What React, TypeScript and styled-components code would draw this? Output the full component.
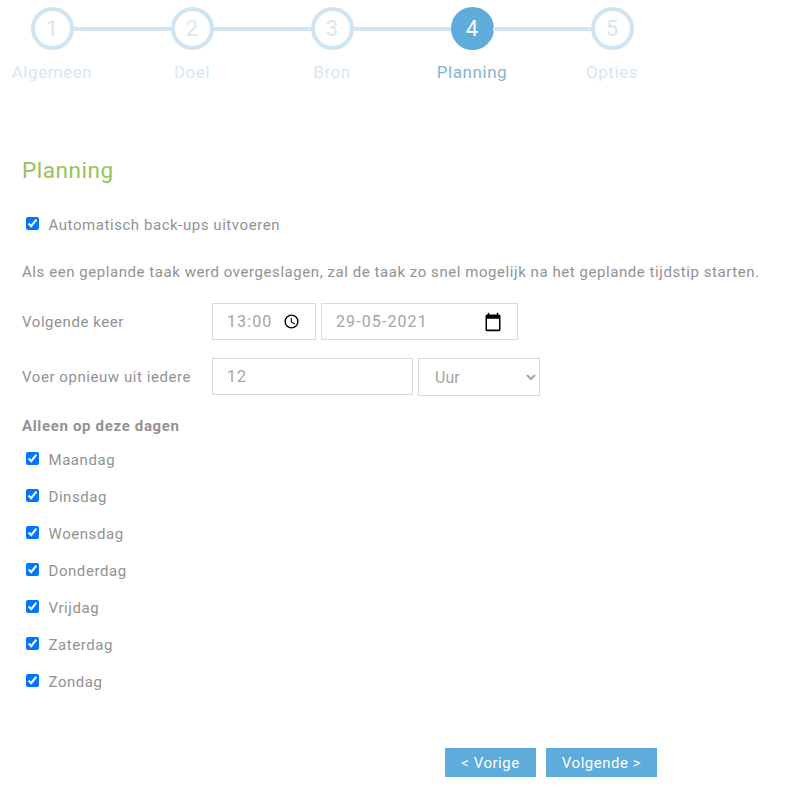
import styled, { createGlobalStyle } from 'styled-components'

const GlobalStyle = createGlobalStyle`
    html, body {
        margin: 0;
        padding: 0;
        background: #fff;
    }
    body {
        font-family: Roboto, "Liberation Sans", sans-serif;
        font-size: 15px;
        color: #929292;
        letter-spacing: 0.56px;
    }
`

const Page = styled.div`
    width: 809px;
    height: 798px;
    overflow: hidden;
`

const Stepper = styled.div`
    display: flex;
    margin-left: -18px;
    padding-top: 7px;
`

const Step = styled.div<{ $active?: boolean }>`
    position: relative;
    display: flex;
    flex-direction: column;
    align-items: center;
    width: 140px;
    font-size: 17px;
    color: ${(p) => (p.$active ? '#85b3d2' : '#d6e7f1')};

    &:not(:last-child)::after {
        content: '';
        position: absolute;
        top: 19.5px;
        left: 91px;
        width: 98px;
        height: 4px;
        background: #cfe5f1;
    }
`

const Circle = styled.div<{ $active?: boolean }>`
    box-sizing: border-box;
    width: 43px;
    height: 43px;
    border-radius: 50%;
    border: 4px solid ${(p) => (p.$active ? '#5eacdc' : '#cfe5f1')};
    background: ${(p) => (p.$active ? '#5eacdc' : '#fff')};
    color: ${(p) => (p.$active ? '#fff' : '#d6e7f1')};
    font-size: 22px;
    letter-spacing: 0;
    display: flex;
    align-items: center;
    justify-content: center;
`

const StepLabel = styled.div`
    margin-top: 13px;
    line-height: 19px;
`

const Content = styled.div`
    padding: 73px 0 0 22px;
`

const Title = styled.h2`
    margin: 0 0 21px;
    font-size: 22.5px;
    line-height: 30px;
    font-weight: 400;
    color: #96c25a;
`

const CheckRow = styled.label`
    display: flex;
    align-items: center;
    height: 37px;
    padding-left: 4px;
`

const Check = styled.input.attrs({ type: 'checkbox', defaultChecked: true })`
    width: 13px;
    height: 13px;
    margin: 0 9.5px 2px 0;
`

const Note = styled.p`
    margin: 19px 0 21px;
    line-height: 20px;
`

const FormRow = styled.div`
    display: flex;
    align-items: flex-start;
    gap: 5px;
    margin-bottom: 18px;
`

const RowLabel = styled.div`
    width: 185px;
    height: 37px;
    line-height: 38px;
`

const Field = styled.div<{ $width: number }>`
    box-sizing: border-box;
    display: flex;
    align-items: center;
    justify-content: space-between;
    width: ${(p) => p.$width}px;
    height: 37px;
    padding: 0 15px 0 14px;
    border: 1px solid #dadada;
    font-size: 16px;
    color: #a5a5a5;
`

const FieldInput = styled.input`
    flex: 1;
    min-width: 0;
    border: 0;
    padding: 0;
    outline: 0;
    background: none;
    font: inherit;
    color: inherit;
    letter-spacing: 1.1px;
`

const Select = styled.select`
    box-sizing: border-box;
    width: 122px;
    height: 38px;
    padding: 0 0 0 12px;
    border: 1px solid #dadada;
    border-radius: 0;
    background: #fff;
    font: inherit;
    font-size: 16px;
    color: #a5a5a5;
`

const SectionLabel = styled.div`
    margin-top: 20px;
    margin-bottom: 5px;
    font-weight: 700;
    font-size: 15px;
    line-height: 20px;
    letter-spacing: 0.66px;
`

const Buttons = styled.div`
    display: flex;
    gap: 10px;
    margin: 48px 0 0 423px;
`

const Button = styled.button<{ $width: number }>`
    width: ${(p) => p.$width}px;
    height: 29px;
    padding: 0;
    border: 0;
    background: #5eacdc;
    color: #fff;
    font: inherit;
    letter-spacing: 0.52px;
`

const days = ['Maandag', 'Dinsdag', 'Woensdag', 'Donderdag', 'Vrijdag', 'Zaterdag', 'Zondag']
const steps = ['Algemeen', 'Doel', 'Bron', 'Planning', 'Opties']

const ClockIcon = () => (
    <svg width="17" height="17" viewBox="0 0 24 24">
        <path
            fill="#000"
            d="M12 2a10 10 0 1 0 0 20 10 10 0 0 0 0-20zm0 18a8 8 0 1 1 0-16 8 8 0 0 1 0 16zm.5-13H11v6l5.2 3.2.8-1.3-4.5-2.7V7z"
        />
    </svg>
)

const CalendarIcon = () => (
    <svg width="18" height="20" viewBox="0 0 24 24" preserveAspectRatio="none">
        <path
            fill="#000"
            d="M20 3h-1V1h-2v2H7V1H5v2H4c-1.1 0-2 .9-2 2v16c0 1.1.9 2 2 2h16c1.1 0 2-.9 2-2V5c0-1.1-.9-2-2-2zm0 18H4V8h16v13z"
        />
    </svg>
)

export default function App() {
    return (
        <Page>
            <GlobalStyle />
            <Stepper>
                {steps.map((name, i) => (
                    <Step key={name} $active={i === 3}>
                        <Circle $active={i === 3}>{i + 1}</Circle>
                        <StepLabel>{name}</StepLabel>
                    </Step>
                ))}
            </Stepper>
            <Content>
                <Title>Planning</Title>
                <CheckRow>
                    <Check />
                    Automatisch back-ups uitvoeren
                </CheckRow>
                <Note>Als een geplande taak werd overgeslagen, zal de taak zo snel mogelijk na het geplande tijdstip starten.</Note>
                <FormRow>
                    <RowLabel>Volgende keer</RowLabel>
                    <Field $width={104}>
                        <FieldInput readOnly value="13:00" />
                        <ClockIcon />
                    </Field>
                    <Field $width={197}>
                        <FieldInput readOnly value="29-05-2021" />
                        <CalendarIcon />
                    </Field>
                </FormRow>
                <FormRow>
                    <RowLabel>Voer opnieuw uit iedere</RowLabel>
                    <Field $width={201}>
                        <FieldInput readOnly value="12" />
                    </Field>
                    <Select defaultValue="Uur">
                        <option>Uur</option>
                        <option>Dag</option>
                    </Select>
                </FormRow>
                <SectionLabel>Alleen op deze dagen</SectionLabel>
                {days.map((day) => (
                    <CheckRow key={day}>
                        <Check />
                        {day}
                    </CheckRow>
                ))}
                <Buttons>
                    <Button $width={91}>&lt; Vorige</Button>
                    <Button $width={111}>Volgende &gt;</Button>
                </Buttons>
            </Content>
        </Page>
    )
}
